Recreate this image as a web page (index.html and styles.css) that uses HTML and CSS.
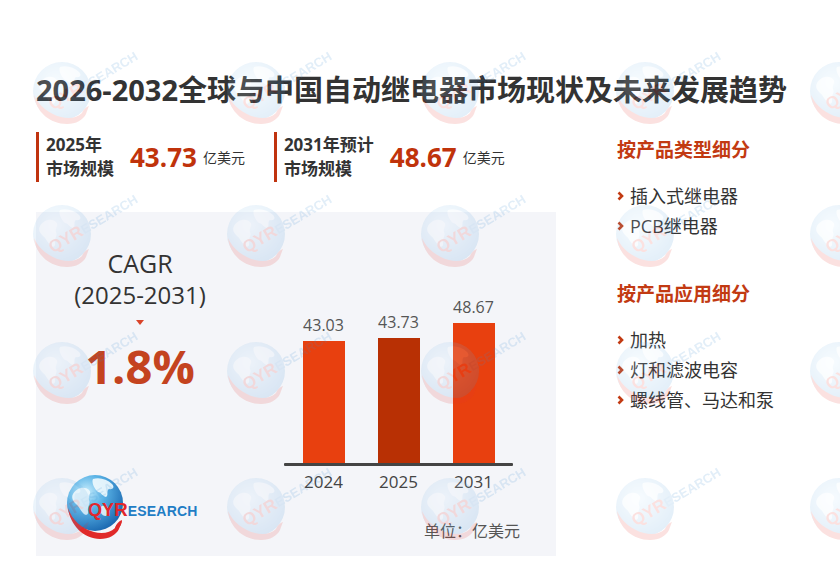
FILE: index.html
```html
<!DOCTYPE html>
<html lang="zh-CN">
<head>
<meta charset="utf-8">
<title>2026-2032全球与中国自动继电器市场现状及未来发展趋势</title>
<link rel="stylesheet" href="styles.css">
</head>
<body>
<div class="page">
  <h1 class="title">2026-2032全球与中国自动继电器市场现状及未来发展趋势</h1>
  <div class="main">
    <div class="left">
      <div class="stats">
        <div class="stat">
          <div class="stat-label">2025年<br>市场规模</div>
          <div class="stat-value">43.73</div>
          <div class="stat-unit">亿美元</div>
        </div>
        <div class="stat">
          <div class="stat-label">2031年预计<br>市场规模</div>
          <div class="stat-value">48.67</div>
          <div class="stat-unit">亿美元</div>
        </div>
      </div>
      <div class="panel">
        <div class="cagr-col">
          <div class="cagr">
            <div class="cagr-title">CAGR</div>
            <div class="cagr-years">(2025-2031)</div>
            <div class="cagr-arrow"></div>
            <div class="cagr-value">1.8%</div>
          </div>
          <div class="logo">
            <svg class="logo-globe" width="68" height="72" viewBox="0 0 68 72">
              <defs>
                <radialGradient id="lg" cx="0.35" cy="0.3" r="0.8">
                  <stop offset="0" stop-color="#c6ecfc"/>
                  <stop offset="0.4" stop-color="#5ab3e6"/>
                  <stop offset="1" stop-color="#125ea9"/>
                </radialGradient>
              </defs>
              <circle cx="31" cy="33" r="28" fill="url(#lg)"/>
              <path d="M9 24 C13 17 21 16 25 20 C28 23 24 26 25 30 C27 34 23 36 24 41 C25 45 21 46 19 43 C16 40 15 36 12 34 C9 31 7 28 9 24 Z" fill="#eef8fd" opacity="0.92"/>
              <path d="M29 9 C35 7 43 9 48 14 C51 17 49 20 45 19 C42 21 45 25 42 27 C38 26 37 22 34 22 C31 20 27 12 29 9 Z" fill="#eef8fd" opacity="0.92"/>
              <path d="M38 36 C42 35 46 38 45 43 C44 47 39 47 37 43 C36 40 36 37 38 36 Z" fill="#eef8fd" opacity="0.85"/>
              <path d="M4 38 C6 55 20 69 36 69 C45 69 52 65 55 59 C56 56 57 53 58 51 C55 52 52 55 51 58 C46 63 38 64 30 62 C18 59 8 50 4 38 Z" fill="#e02a2a"/>
              <path d="M51 58 C52 54 55 51 58 50 C58 54 56 57 53 60 Z" fill="#e02a2a"/>
            </svg>
            <div class="logo-text"><span class="qy">QY</span><span class="r">R</span><span class="esearch">ESEARCH</span></div>
          </div>
        </div>
        <div class="chart-col">
          <div class="chart">
            <div class="bars">
              <div class="slot"><div class="bar-label">43.03</div><div class="bar" style="height:122px"></div></div>
              <div class="slot"><div class="bar-label">43.73</div><div class="bar bar-dark" style="height:125px"></div></div>
              <div class="slot"><div class="bar-label">48.67</div><div class="bar" style="height:140px"></div></div>
            </div>
            <div class="axis"></div>
            <div class="xlabels">
              <div class="xlabel">2024</div>
              <div class="xlabel">2025</div>
              <div class="xlabel">2031</div>
            </div>
          </div>
          <div class="unit">单位：亿美元</div>
        </div>
      </div>
    </div>
    <div class="right">
      <div class="seg-title">按产品类型细分</div>
      <ul class="seg-list">
        <li class="seg-item"><svg class="chev" width="7" height="10" viewBox="0 0 7 10"><polyline points="1.5,1.5 5,5 1.5,8.5" fill="none" stroke="#c23a12" stroke-width="2.6"/></svg>插入式继电器</li>
        <li class="seg-item"><svg class="chev" width="7" height="10" viewBox="0 0 7 10"><polyline points="1.5,1.5 5,5 1.5,8.5" fill="none" stroke="#c23a12" stroke-width="2.6"/></svg>PCB继电器</li>
      </ul>
      <div class="seg-title seg-title-2">按产品应用细分</div>
      <ul class="seg-list">
        <li class="seg-item"><svg class="chev" width="7" height="10" viewBox="0 0 7 10"><polyline points="1.5,1.5 5,5 1.5,8.5" fill="none" stroke="#c23a12" stroke-width="2.6"/></svg>加热</li>
        <li class="seg-item"><svg class="chev" width="7" height="10" viewBox="0 0 7 10"><polyline points="1.5,1.5 5,5 1.5,8.5" fill="none" stroke="#c23a12" stroke-width="2.6"/></svg>灯和滤波电容</li>
        <li class="seg-item"><svg class="chev" width="7" height="10" viewBox="0 0 7 10"><polyline points="1.5,1.5 5,5 1.5,8.5" fill="none" stroke="#c23a12" stroke-width="2.6"/></svg>螺线管、马达和泵</li>
      </ul>
    </div>
  </div>
  <svg class="watermarks" width="840" height="583" viewBox="0 0 840 583" aria-hidden="true">
    <defs>
      <radialGradient id="wg" cx="0.4" cy="0.35" r="0.7">
        <stop offset="0" stop-color="#c4e4f8"/>
        <stop offset="1" stop-color="#3f8fd2"/>
      </radialGradient>
      <g id="wm">
        <circle cx="0" cy="0" r="29" fill="url(#wg)"/>
        <path d="M-22 -8 C-18 -15 -10 -16 -6 -12 C-3 -9 -7 -6 -6 -2 C-4 2 -8 4 -7 9 C-6 13 -10 14 -12 11 C-15 8 -16 4 -19 2 C-22 -1 -24 -4 -22 -8 Z" fill="#ffffff" opacity="0.7"/>
        <path d="M-2 -24 C4 -26 12 -24 17 -19 C20 -16 18 -13 14 -14 C11 -12 14 -8 11 -6 C7 -7 6 -11 3 -11 C0 -13 -4 -21 -2 -24 Z" fill="#ffffff" opacity="0.7"/>
        <path d="M-28 4 C-26 21 -12 33 5 33 C14 33 21 29 24 23 C25 20 26 17 27 15 C24 16 21 19 20 22 C15 27 7 28 -1 26 C-13 23 -23 15 -28 4 Z" fill="#e53a2f"/>
        <text transform="rotate(-31)" x="-18" y="12" class="wm-text"><tspan class="wm-qyr">QYR</tspan><tspan class="wm-rest">ESEARCH</tspan></text>
      </g>
    </defs>
    <g class="wm-layer">
      <use href="#wm" x="62" y="91"/><use href="#wm" x="256" y="91"/><use href="#wm" x="450" y="91"/><use href="#wm" x="645" y="91"/><use href="#wm" x="839" y="91"/>
      <use href="#wm" x="62" y="234"/><use href="#wm" x="256" y="234"/><use href="#wm" x="450" y="234"/><use href="#wm" x="645" y="234"/><use href="#wm" x="839" y="234"/>
      <use href="#wm" x="62" y="371"/><use href="#wm" x="256" y="371"/><use href="#wm" x="450" y="371"/><use href="#wm" x="645" y="371"/><use href="#wm" x="839" y="371"/>
      <use href="#wm" x="62" y="507"/><use href="#wm" x="256" y="507"/><use href="#wm" x="450" y="507"/><use href="#wm" x="645" y="507"/><use href="#wm" x="839" y="507"/>
    </g>
  </svg>
</div>
</body>
</html>
```
FILE: styles.css
```css
* { box-sizing: border-box; }
html, body { margin: 0; padding: 0; background: #ffffff; }
body {
  font-family: "Open Sans", "Noto Sans CJK SC", sans-serif;
  color: #333333;
}
.page {
  position: relative;
  width: 840px;
  height: 583px;
  overflow: hidden;
  padding: 72px 0 0 36px;
}
.title {
  margin: 0;
  font-size: 29px;
  line-height: 36px;
  font-weight: 700;
  color: #333333;
  white-space: nowrap;
}
.main {
  display: flex;
  gap: 61px;
  margin-top: 24px;
}
.left { width: 520px; display: flex; flex-direction: column; }
.stats { display: flex; gap: 29px; height: 50px; }
.stat {
  display: flex;
  align-items: center;
  border-left: 3px solid #c0330f;
  padding-left: 7px;
  height: 50px;
}
.stat-label {
  font-size: 17px;
  line-height: 24px;
  font-weight: 700;
  color: #333333;
}
.stat-value {
  margin-left: 16px;
  font-size: 26px;
  font-weight: 700;
  color: #c0330b;
  line-height: 30px;
}
.stat-unit {
  margin-left: 6px;
  font-size: 14px;
  color: #333333;
  line-height: 20px;
  padding-top: 2px;
}
.panel {
  margin-top: 30px;
  height: 344px;
  background: #f4f5f9;
  display: flex;
  gap: 40px;
}
.cagr-col {
  width: 208px;
  display: flex;
  flex-direction: column;
  padding-top: 35px;
  padding-bottom: 14px;
}
.cagr { text-align: center; }
.cagr-title { font-size: 25px; line-height: 32px; color: #333333; }
.cagr-years { font-size: 24px; line-height: 32px; color: #333333; }
.cagr-arrow {
  width: 0; height: 0;
  margin: 9px auto 0;
  border-left: 4px solid transparent;
  border-right: 4px solid transparent;
  border-top: 5px solid #d9442a;
}
.cagr-value {
  margin-top: 13px;
  font-size: 47px;
  line-height: 56px;
  font-weight: 700;
  color: #c4431f;
}
.logo {
  margin-top: auto;
  margin-left: 28px;
  position: relative;
  width: 140px;
  height: 72px;
  display: flex;
  align-items: flex-start;
}
.logo-globe { flex: none; }
.logo-text {
  position: absolute;
  left: 24px;
  top: 30px;
  font-family: "Liberation Sans", sans-serif;
  font-weight: 700;
  white-space: nowrap;
  line-height: 20px;
}
.logo-text .qy { color: #e3262b; font-size: 18px; }
.logo-text .r { color: #e3262b; font-size: 19px; }
.logo-text .esearch { color: #1f7dc5; font-size: 14px; letter-spacing: 0.2px; }
.chart-col {
  width: 236px;
  padding-top: 71px;
  display: flex;
  flex-direction: column;
}
.chart { width: 229px; }
.bars {
  height: 180px;
  display: flex;
  align-items: flex-end;
  padding: 0 2px;
}
.slot {
  width: 75px;
  display: flex;
  flex-direction: column;
  align-items: center;
}
.bar-label {
  font-size: 16px;
  line-height: 18px;
  color: #555555;
  margin-bottom: 7px;
}
.bar { width: 42px; background: #e8400f; }
.bar-dark { background: #b83004; }
.axis { height: 3px; background: #444444; border-radius: 1px; }
.xlabels { display: flex; padding: 0 2px; margin-top: 6px; }
.xlabel {
  width: 75px;
  text-align: center;
  font-size: 17px;
  line-height: 20px;
  color: #444444;
}
.unit {
  margin-top: 28px;
  text-align: right;
  font-size: 16px;
  line-height: 20px;
  color: #555555;
  font-family: "Noto Sans CJK SC", sans-serif;
}
.right { padding-top: 4px; }
.seg-title {
  font-size: 19px;
  line-height: 26px;
  font-weight: 700;
  color: #c23a12;
  font-family: "Noto Sans CJK SC", sans-serif;
}
.seg-title-2 { margin-top: 39px; }
.seg-list { list-style: none; margin: 19px 0 0; padding: 0; }
.seg-item {
  display: flex;
  align-items: center;
  font-size: 18px;
  line-height: 30px;
  color: #333333;
}
.chev { margin-right: 6px; flex: none; }
.watermarks {
  position: absolute;
  left: 0;
  top: 0;
  pointer-events: none;
}
.wm-layer { opacity: 0.15; }
.wm-text { font-family: "Liberation Sans", sans-serif; font-weight: 700; }
.wm-qyr { fill: #e53a2f; font-size: 17px; }
.wm-rest { fill: #3f8fd2; font-size: 13px; }
```
